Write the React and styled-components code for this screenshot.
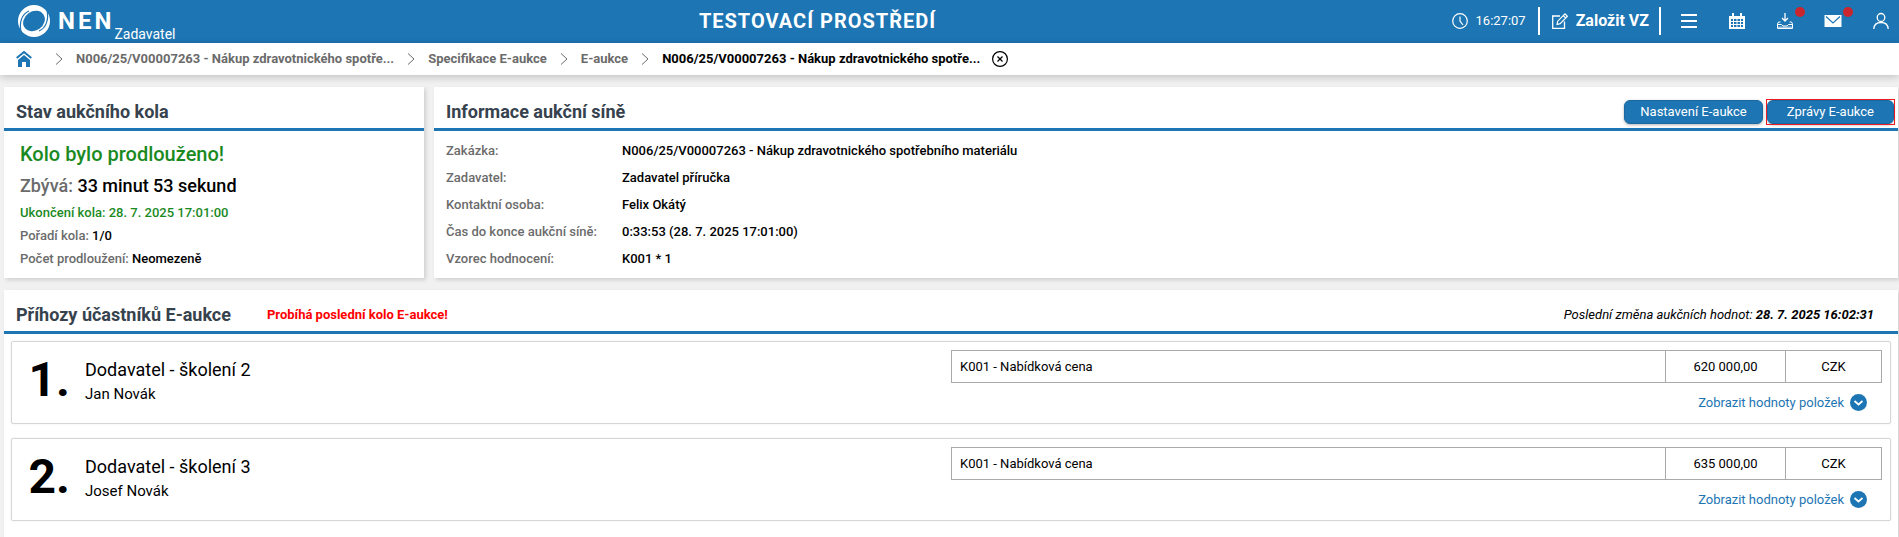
import { Fragment } from "react";
import styled, { ThemeProvider, createGlobalStyle } from "styled-components";

const theme = {
    colors: {
        primary: '#1d75b3',
        background: '#f1f1f1',
        title: '#36424d',
        label: '#6b6b6b',
        success: '#1a8a1f',
        danger: '#c9272d',
        border: '#a9a9a9',
        card: '#d6d6d6',
    },
}

const GlobalStyle = createGlobalStyle`
* {
    box-sizing: border-box;
}
body {
    margin: 0;
    background: ${theme.colors.background};
    color: #000;
    font-family: Roboto, "Liberation Sans", sans-serif;
    font-size: 13px;
    line-height: 16px;
}
h1, h2, p, dl, dd, ol {
    margin: 0;
    padding: 0;
}
button {
    font: inherit;
    border: 0;
    padding: 0;
    background: none;
    color: inherit;
    cursor: pointer;
}
a {
    color: inherit;
    text-decoration: none;
}
svg {
    display: block;
}
`
const Page = styled.div`
    min-height: 100vh;
    display: flex;
    flex-direction: column;
`
const TopBar = styled.header`
    display: flex;
    align-items: center;
    height: 43px;
    flex-shrink: 0;
    padding: 0 10px 1px 18px;
    background: ${({theme})=> theme.colors.primary};
    color: #fff;
`
const Brand = styled.a`
    display: flex;
    align-items: center;
    height: 100%;
    gap: 8px;
`
const BrandName = styled.span`
    font-size: 24px;
    line-height: 28px;
    font-weight: 700;
    letter-spacing: 3px;
`
const BrandRole = styled.span`
    align-self: flex-end;
    margin: 0 8px 0 -8px;
    font-size: 14px;
`
const Environment = styled.h1`
    flex: 1;
    text-align: center;
    font-size: 20px;
    line-height: 24px;
    font-weight: 700;
    letter-spacing: 1px;
`
const Clock = styled.time`
    display: flex;
    align-items: center;
    gap: 8px;
    margin-right: 12px;
`
const NewTender = styled.button`
    display: flex;
    align-items: center;
    gap: 8px;
    height: 28px;
    padding: 0 10px 0 12px;
    border: solid #fff;
    border-width: 0 2px;
    font-size: 16px;
    font-weight: 700;
`
const IconMenu = styled.nav`
    display: flex;
    gap: 32px;
    margin-left: 20px;
`
const IconButton = styled.button`
    position: relative;
    width: 16px;
    height: 16px;
`
const Badge = styled.span`
    position: absolute;
    top: -6px;
    right: -12px;
    width: 10px;
    height: 10px;
    border-radius: 50%;
    background: ${({theme})=> theme.colors.danger};
`
const Breadcrumb = styled.nav`
    display: flex;
    align-items: center;
    height: 32px;
    flex-shrink: 0;
    padding: 0 16px;
    background: #fff;
    box-shadow: 0 2px 8px rgba(0, 0, 0, .2);
    color: ${({theme})=> theme.colors.label};
    font-weight: 700;
    z-index: 1;
`
const Home = styled.a`
    margin-right: 10px;
    color: ${({theme})=> theme.colors.primary};
`
const Chevron = styled.svg`
    margin: 0 13px;
`
const Crumb = styled.a`
    &[aria-current] {
        color: #000;
    }
`
const CloseButton = styled.button`
    margin-left: 12px;
    color: #000;
`
const Content = styled.main`
    flex: 1;
    display: grid;
    grid-template-columns: 420px 1fr;
    grid-template-rows: auto 1fr;
    gap: 12px 10px;
    padding: 12px 1px 0 4px;
`
const Panel = styled.section`
    grid-column: ${({$wide})=> $wide ? '1 / -1' : 'auto'};
    background: #fff;
    box-shadow: 2px 2px 4px rgba(0, 0, 0, .14);
`
const PanelHeader = styled.div`
    display: flex;
    align-items: center;
    height: 44px;
    padding: 9px 4px 0 12px;
    border-bottom: 3px solid ${({theme})=> theme.colors.primary};
`
const PanelTitle = styled.h2`
    color: ${({theme})=> theme.colors.title};
    font-size: 18px;
    line-height: 24px;
    font-weight: 700;
`
const Buttons = styled.div`
    display: flex;
    gap: 4px;
    margin-left: auto;
`
const Action = styled.button`
    height: 24px;
    padding: 0 ${({$wide})=> $wide ? 19 : 15}px;
    border: 1px solid #1a69a1;
    border-radius: 6px;
    background: ${({theme})=> theme.colors.primary};
    box-shadow: 0 1px 3px rgba(0, 0, 0, .3);
    color: #fff;
`
const Marked = styled.div`
    display: flex;
    outline: 1px solid #ed1c24;
`
const Status = styled.div`
    display: flex;
    flex-direction: column;
    padding: 8px 16px 0;
`
const StatusRow = styled.p`
    color: ${({theme, $success})=> $success ? theme.colors.success : theme.colors.label};
    font-size: ${({$size})=> $size || 13}px;
    line-height: ${({$size})=> $size ? 31 : 23}px;
    font-weight: 500;
    & b {
        color: #000;
        font-weight: 500;
    }
`
const Details = styled.dl`
    display: grid;
    grid-template-columns: 176px 1fr;
    grid-auto-rows: 27px;
    align-items: center;
    padding: 6px 12px;
    font-weight: 500;
    & dt {
        color: ${({theme})=> theme.colors.label};
    }
`
const Warning = styled.strong`
    margin-left: 36px;
    color: #f00;
    font-weight: 700;
`
const LastChange = styled.p`
    margin-left: auto;
    padding-right: 20px;
    font-style: italic;
`
const Bids = styled.ol`
    display: flex;
    flex-direction: column;
    gap: 14px;
    padding: 7px;
    list-style: none;
`
const Bid = styled.li`
    display: grid;
    grid-template-columns: 1fr 1fr;
    height: 83px;
    border: 1px solid ${({theme})=> theme.colors.card};
    border-radius: 2px;
    box-shadow: 0 0 2px rgba(0, 0, 0, .1);
`
const Bidder = styled.div`
    display: flex;
`
const Rank = styled.span`
    width: 58px;
    margin: 10px 15px 0 0;
    text-align: right;
    font-size: 48px;
    line-height: 56px;
    font-weight: 700;
`
const Company = styled.p`
    margin-top: 16px;
    font-size: 18px;
    line-height: 24px;
`
const Person = styled.p`
    font-size: 15px;
    line-height: 24px;
`
const Offer = styled.div`
    display: flex;
    flex-direction: column;
    align-items: flex-end;
    gap: 11px;
    padding: 8px 8px 0 0;
`
const Values = styled.table`
    width: 100%;
    height: 33px;
    border-collapse: collapse;
    table-layout: fixed;
    & td {
        border: 1px solid ${({theme})=> theme.colors.border};
        padding: 0 8px;
        text-align: center;
    }
    & td:first-child {
        text-align: left;
    }
    & td:nth-child(2) {
        width: 120px;
    }
    & td:last-child {
        width: 96px;
    }
`
const Expand = styled.button`
    display: flex;
    align-items: center;
    gap: 6px;
    margin-right: 15px;
    color: ${({theme})=> theme.colors.primary};
`

const Logo = ()=> (
    <svg width="32" height="32" viewBox="0 0 32 32" aria-hidden="true">
        <circle cx="16" cy="16" r="16" fill="#fff" />
        <ellipse cx="16" cy="16" rx="11.5" ry="9.5" fill={theme.colors.primary} transform="rotate(-35 16 16)" />
        <g fill="none" stroke={theme.colors.primary} strokeWidth="1.2">
            <path d="M11 6C4 9 1 17 3 27" />
            <path d="M21 26C28 23 31 15 29 5" />
        </g>
    </svg>
)

const icons = {
    menu: <path d="M0 2H16M0 8H16M0 14H16" strokeWidth="2" />,
    calendar: (
        <>
            <path d="M0 3H16V16H0Z" fill="#fff" stroke="none" />
            <path d="M4 0V4M12 0V4" strokeWidth="2" />
            <path d="M2 6H14V14H2Z" fill={theme.colors.primary} stroke="none" />
            <path d="M2 8.5H14M2 11.5H14M4.5 6V14M8 6V14M11.5 6V14" />
        </>
    ),
    download: (
        <>
            <path d="M8 0V8M5 5L8 8L11 5" strokeWidth="1.3" />
            <path d="M3.5 9H1.5L.5 11V15.5H15.5V11L14.5 9H12.5M1 11.5H4.5L6 13H10L11.5 11.5H15" />
            <path d="M1 13.5H15V15H1Z" fill="#fff" fillOpacity=".6" stroke="none" />
        </>
    ),
    mail: (
        <>
            <path d="M-.5 2H16.5V14H-.5Z" fill="#fff" stroke="none" />
            <path d="M1 3.5L8 10L15 3.5" stroke={theme.colors.primary} strokeWidth="1.2" />
        </>
    ),
    user: (
        <>
            <ellipse cx="8" cy="4.5" rx="3.8" ry="4" strokeWidth="1.3" />
            <path d="M.8 16C1 12 3.5 9.5 8 9.5S15 12 15.2 16" strokeWidth="1.3" />
        </>
    ),
    clock: (
        <>
            <circle cx="8" cy="8" r="7.3" strokeWidth="1.2" />
            <path d="M8 3.5V8L11 12" strokeWidth="1.2" />
        </>
    ),
    edit: (
        <>
            <path d="M8 3H.7V15.3H12.5V8.5" strokeWidth="1.3" />
            <path d="M5 11.5L5.7 8.2L13 .9L15.4 3.2L8.2 10.6ZM11.3 2.6L13.7 5" strokeWidth="1.2" />
        </>
    ),
}

const Icon = ({name})=> (
    <svg width="16" height="16" viewBox="0 0 16 16" fill="none" stroke="#fff" overflow="visible" aria-hidden="true">
        {icons[name]}
    </svg>
)

const Separator = ()=> (
    <Chevron width="8" height="12" viewBox="0 0 8 12" fill="none" stroke="#6b6b6b" aria-hidden="true">
        <path d="M1 .5L7 6L1 11.5" />
    </Chevron>
)

const menu = [
    { name: 'menu', label: 'Menu' },
    { name: 'calendar', label: 'Kalendář' },
    { name: 'download', label: 'Stažené soubory', badge: true },
    { name: 'mail', label: 'Zprávy', badge: true },
    { name: 'user', label: 'Uživatel' },
]

const crumbs = [
    'N006/25/V00007263 - Nákup zdravotnického spotře...',
    'Specifikace E-aukce',
    'E-aukce',
    'N006/25/V00007263 - Nákup zdravotnického spotře...',
]

const details = [
    ['Zakázka:', 'N006/25/V00007263 - Nákup zdravotnického spotřebního materiálu'],
    ['Zadavatel:', 'Zadavatel příručka'],
    ['Kontaktní osoba:', 'Felix Okátý'],
    ['Čas do konce aukční síně:', '0:33:53 (28. 7. 2025 17:01:00)'],
    ['Vzorec hodnocení:', 'K001 * 1'],
]

const bids = [
    { company: 'Dodavatel - školení 2', person: 'Jan Novák', price: '620 000,00' },
    { company: 'Dodavatel - školení 3', person: 'Josef Novák', price: '635 000,00' },
]

const Header = ()=> (
    <TopBar>
        <Brand href="#">
            <Logo />
            <BrandName>NEN</BrandName>
            <BrandRole>Zadavatel</BrandRole>
        </Brand>
        <Environment>TESTOVACÍ PROSTŘEDÍ</Environment>
        <Clock><Icon name="clock" />16:27:07</Clock>
        <NewTender><Icon name="edit" />Založit VZ</NewTender>
        <IconMenu>
            {menu.map(({name, label, badge})=> (
                <IconButton key={name} aria-label={label}>
                    <Icon name={name} />
                    {badge && <Badge />}
                </IconButton>
            ))}
        </IconMenu>
    </TopBar>
)

const Path = ()=> (
    <Breadcrumb>
        <Home href="#" aria-label="Domů">
            <svg width="16" height="16" viewBox="0 0 16 16" fill="currentColor">
                <path d="M2 9L8 4L14 9V16H10V11H6V16H2Z" />
                <path d="M.7 7L8 1L15.3 7" fill="none" stroke="currentColor" strokeWidth="2" />
            </svg>
        </Home>
        {crumbs.map((text, i)=> (
            <Fragment key={i}>
                <Separator />
                <Crumb href="#" aria-current={i === crumbs.length - 1 ? 'page' : undefined}>{text}</Crumb>
            </Fragment>
        ))}
        <CloseButton aria-label="Zavřít">
            <svg width="16" height="16" viewBox="0 0 16 16" fill="none" stroke="currentColor">
                <circle cx="8" cy="8" r="7.4" strokeWidth="1.2" />
                <path d="M5.5 5.5L10.5 10.5M10.5 5.5L5.5 10.5" strokeWidth="1.2" />
            </svg>
        </CloseButton>
    </Breadcrumb>
)

const App = ()=>{
    return(
        <ThemeProvider theme={theme}>
            <GlobalStyle />
            <Page>
                <Header />
                <Path />
                <Content>
                    <Panel>
                        <PanelHeader>
                            <PanelTitle>Stav aukčního kola</PanelTitle>
                        </PanelHeader>
                        <Status>
                            <StatusRow $size={20} $success>Kolo bylo prodlouženo!</StatusRow>
                            <StatusRow $size={18}>Zbývá: <b>33 minut 53 sekund</b></StatusRow>
                            <StatusRow $success>Ukončení kola: 28. 7. 2025 17:01:00</StatusRow>
                            <StatusRow>Pořadí kola: <b>1/0</b></StatusRow>
                            <StatusRow>Počet prodloužení: <b>Neomezeně</b></StatusRow>
                        </Status>
                    </Panel>

                    <Panel>
                        <PanelHeader>
                            <PanelTitle>Informace aukční síně</PanelTitle>
                            <Buttons>
                                <Action>Nastavení E-aukce</Action>
                                <Marked>
                                    <Action $wide>Zprávy E-aukce</Action>
                                </Marked>
                            </Buttons>
                        </PanelHeader>
                        <Details>
                            {details.map(([label, value])=> (
                                <Fragment key={label}>
                                    <dt>{label}</dt>
                                    <dd>{value}</dd>
                                </Fragment>
                            ))}
                        </Details>
                    </Panel>

                    <Panel $wide>
                        <PanelHeader>
                            <PanelTitle>Příhozy účastníků E-aukce</PanelTitle>
                            <Warning>Probíhá poslední kolo E-aukce!</Warning>
                            <LastChange>Poslední změna aukčních hodnot: <b>28. 7. 2025 16:02:31</b></LastChange>
                        </PanelHeader>
                        <Bids>
                            {bids.map(({company, person, price}, i)=> (
                                <Bid key={company}>
                                    <Bidder>
                                        <Rank>{i + 1}.</Rank>
                                        <div>
                                            <Company>{company}</Company>
                                            <Person>{person}</Person>
                                        </div>
                                    </Bidder>
                                    <Offer>
                                        <Values>
                                            <tbody>
                                                <tr>
                                                    <td>K001 - Nabídková cena</td>
                                                    <td>{price}</td>
                                                    <td>CZK</td>
                                                </tr>
                                            </tbody>
                                        </Values>
                                        <Expand>
                                            Zobrazit hodnoty položek
                                            <svg width="17" height="17" viewBox="0 0 17 17" aria-hidden="true">
                                                <circle cx="8.5" cy="8.5" r="8.5" fill={theme.colors.primary} />
                                                <path d="M4.5 7L8.5 10.5L12.5 7" fill="none" stroke="#fff" strokeWidth="1.8" />
                                            </svg>
                                        </Expand>
                                    </Offer>
                                </Bid>
                            ))}
                        </Bids>
                    </Panel>
                </Content>
            </Page>
        </ThemeProvider>
    )
}

export default App
